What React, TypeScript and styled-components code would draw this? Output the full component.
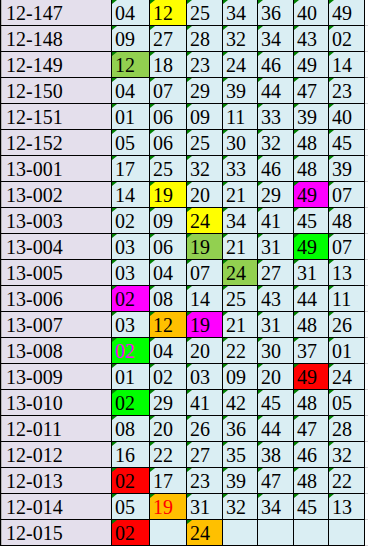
import React from "react";
import styled, { createGlobalStyle } from "styled-components";

const Global = createGlobalStyle`
  html, body { margin: 0; padding: 0; background: #ffffff; }
  body { font-family: "Liberation Serif", "Times New Roman", serif; }
`;

type Fill = "yellow" | "lime" | "green" | "magenta" | "red" | "orange";

const fills: Record<Fill, string> = {
  yellow: "#ffff00",
  lime: "#92d050",
  green: "#00ff00",
  magenta: "#ff00ff",
  red: "#ff0000",
  orange: "#ffc000",
};

type Cell = { v: string; fill?: Fill; ink?: string };

const c = (v: string, fill?: Fill, ink?: string): Cell => ({ v, fill, ink });

const rows: { id: string; nums: Cell[] }[] = [
  { id: "12-147", nums: [c("04"), c("12", "yellow"), c("25"), c("34"), c("36"), c("40"), c("49")] },
  { id: "12-148", nums: [c("09"), c("27"), c("28"), c("32"), c("34"), c("43"), c("02")] },
  { id: "12-149", nums: [c("12", "lime"), c("18"), c("23"), c("24"), c("46"), c("49"), c("14")] },
  { id: "12-150", nums: [c("04"), c("07"), c("29"), c("39"), c("44"), c("47"), c("23")] },
  { id: "12-151", nums: [c("01"), c("06"), c("09"), c("11"), c("33"), c("39"), c("40")] },
  { id: "12-152", nums: [c("05"), c("06"), c("25"), c("30"), c("32"), c("48"), c("45")] },
  { id: "13-001", nums: [c("17"), c("25"), c("32"), c("33"), c("46"), c("48"), c("39")] },
  { id: "13-002", nums: [c("14"), c("19", "yellow"), c("20"), c("21"), c("29"), c("49", "magenta"), c("07")] },
  { id: "13-003", nums: [c("02"), c("09"), c("24", "yellow"), c("34"), c("41"), c("45"), c("48")] },
  { id: "13-004", nums: [c("03"), c("06"), c("19", "lime"), c("21"), c("31"), c("49", "green"), c("07")] },
  { id: "13-005", nums: [c("03"), c("04"), c("07"), c("24", "lime"), c("27"), c("31"), c("13")] },
  { id: "13-006", nums: [c("02", "magenta"), c("08"), c("14"), c("25"), c("43"), c("44"), c("11")] },
  { id: "13-007", nums: [c("03"), c("12", "orange"), c("19", "magenta"), c("21"), c("31"), c("48"), c("26")] },
  { id: "13-008", nums: [c("02", "green", "#ff00ff"), c("04"), c("20"), c("22"), c("30"), c("37"), c("01")] },
  { id: "13-009", nums: [c("01"), c("02"), c("03"), c("09"), c("20"), c("49", "red"), c("24")] },
  { id: "13-010", nums: [c("02", "green"), c("29"), c("41"), c("42"), c("45"), c("48"), c("05")] },
  { id: "12-011", nums: [c("08"), c("20"), c("26"), c("36"), c("44"), c("47"), c("28")] },
  { id: "12-012", nums: [c("16"), c("22"), c("27"), c("35"), c("38"), c("46"), c("32")] },
  { id: "12-013", nums: [c("02", "red"), c("17"), c("23"), c("39"), c("47"), c("48"), c("22")] },
  { id: "12-014", nums: [c("05"), c("19", "orange", "#ff0000"), c("31"), c("32"), c("34"), c("45"), c("13")] },
  { id: "12-015", nums: [c("02", "red"), c(""), c("24", "orange"), c(""), c(""), c(""), c("")] },
];

const Page = styled.div`
  display: flex;
  align-items: flex-start;
  width: 368px;
  height: 546px;
  overflow: hidden;
`;

const Sheet = styled.div`
  display: grid;
  grid-template-columns: 111px 37px 36px 35px 34px 35px 34px 35px;
  grid-auto-rows: 25px;
  gap: 1px;
  padding: 0 1px 1px 0;
  background: #000000;
  flex: none;
`;

const Margin = styled.div`
  flex: 1;
  height: 546px;
  background: repeating-linear-gradient(
    to bottom,
    #ffffff 0px,
    #ffffff 25px,
    #d4d4d4 25px,
    #d4d4d4 26px
  );
`;

const Label = styled.div`
  background: #e4dfec;
  border-left: 1px solid #b4b4b4;
  margin-left: 1px;
  padding: 0 0 1px 4px;
  display: flex;
  align-items: flex-end;
  font-size: 20px;
  line-height: 22px;
  color: #000000;
`;

const Num = styled.div<{ $fill?: string; $ink?: string; $mark: boolean }>`
  position: relative;
  background: ${(p) => p.$fill ?? "#daeef3"};
  color: ${(p) => p.$ink ?? "#000000"};
  padding: 0 0 1px 3px;
  display: flex;
  align-items: flex-end;
  font-size: 20px;
  line-height: 22px;

  &::before {
    content: "";
    display: ${(p) => (p.$mark ? "block" : "none")};
    position: absolute;
    top: 0;
    left: 0;
    width: 0;
    height: 0;
    border-top: 4px solid #008000;
    border-right: 5px solid transparent;
  }
`;

export default function App() {
  return (
    <>
      <Global />
      <Page>
        <Sheet>
          {rows.map((r) => (
            <React.Fragment key={r.id}>
              <Label>{r.id}</Label>
              {r.nums.map((n, i) => (
                <Num
                  key={i}
                  $fill={n.fill ? fills[n.fill] : undefined}
                  $ink={n.ink}
                  $mark={n.v !== ""}
                >
                  {n.v}
                </Num>
              ))}
            </React.Fragment>
          ))}
        </Sheet>
        <Margin />
      </Page>
    </>
  );
}
